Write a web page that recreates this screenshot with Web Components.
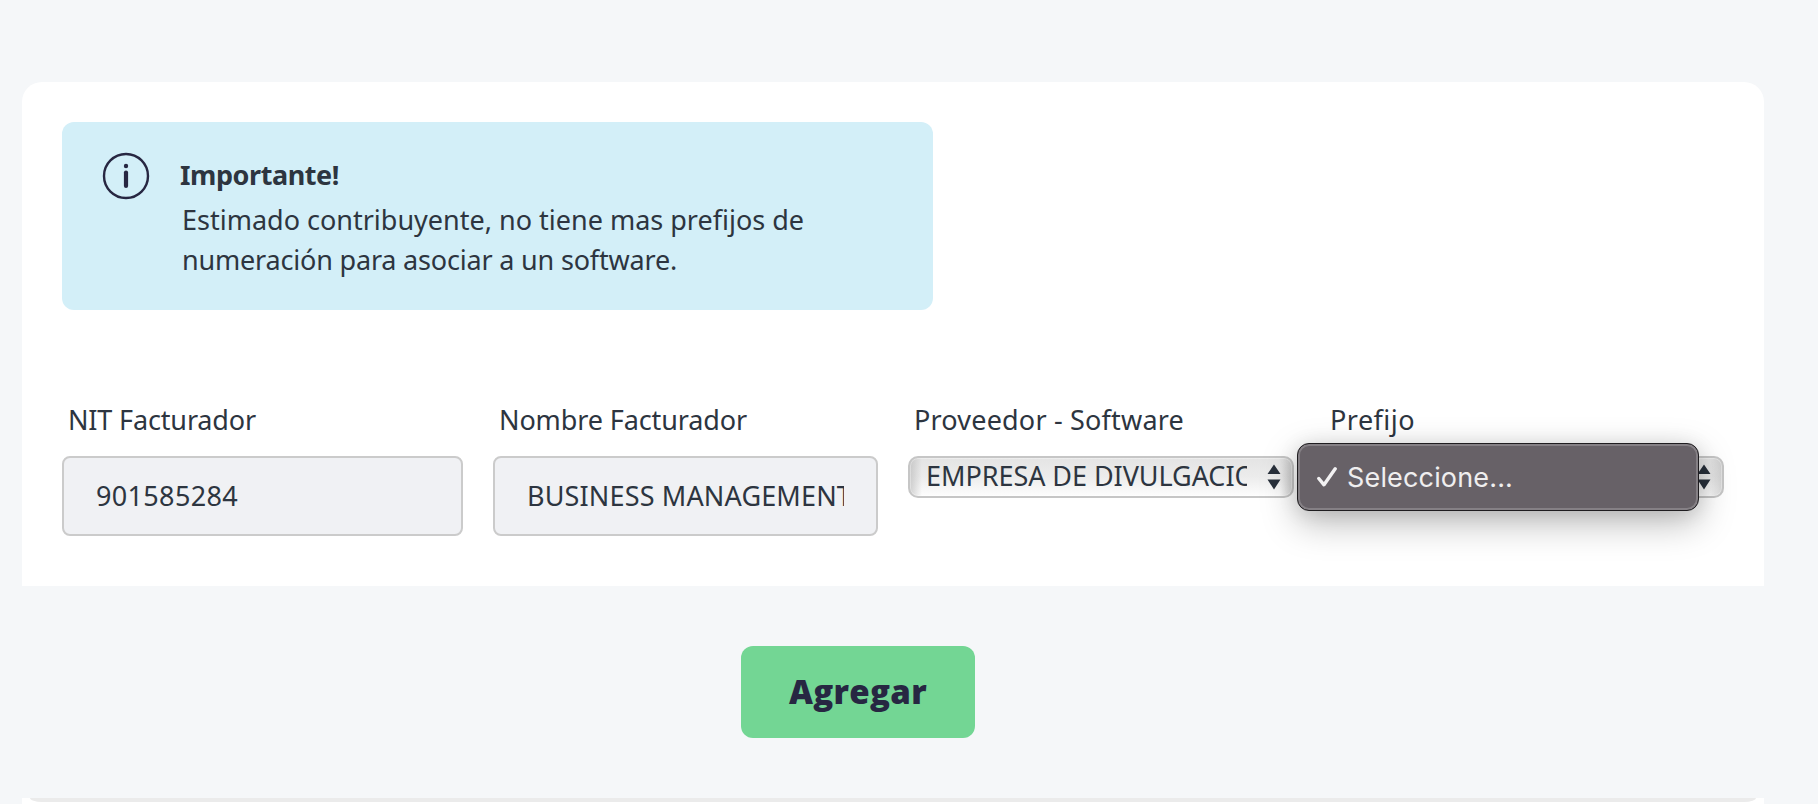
<!DOCTYPE html>
<html lang="es">
<head>
<meta charset="utf-8">
<title>Asociar prefijos</title>
<style>
    html, body {
        margin: 0;
        height: 100%;
        overflow: hidden;
    }
    body {
        background: #f5f7f9;
        color: #2d3540;
        font-family: "Noto Sans", sans-serif;
        font-size: 27px;
    }
</style>
</head>
<body>
<prefix-page></prefix-page>

<script>
(function () {
    function define(name, html, setup) {
        const template = document.createElement("template");
        template.innerHTML = html;
        customElements.define(name, class extends HTMLElement {
            constructor() {
                super();
                this.attachShadow({ mode: "open" }).appendChild(template.content.cloneNode(true));
            }
            connectedCallback() {
                if (setup) setup(this, this.shadowRoot);
            }
        });
    }

    // a single line of text, tracked so that it takes the given width
    define("text-line", `
        <style>
            :host { display: block; white-space: nowrap; }
            span { display: inline-block; }
        </style>
        <span><slot></slot></span>
    `, (host, root) => {
        const span = root.querySelector("span");
        const width = span.getBoundingClientRect().width;
        const target = parseFloat(host.getAttribute("width"));
        span.style.letterSpacing = (target - width) / host.textContent.length + "px";
    });

    define("info-alert", `
        <style>
            :host {
                display: flex;
                box-sizing: border-box;
                width: 871px;
                height: 188px;
                padding: 30px 40px;
                gap: 30px;
                border-radius: 12px;
                background: #d3eff8;
            }
            svg { flex: none; width: 48px; height: 48px; }
            .title {
                padding-top: 3px;
                line-height: 40px;
                font-weight: 700;
                margin-bottom: 5px;
            }
            .text { padding-left: 2px; line-height: 40px; }
        </style>
        <svg viewBox="0 0 48 48" fill="none" stroke="#272742" stroke-linecap="round">
            <circle cx="24" cy="24" r="22" stroke-width="2.4"/>
            <path d="M24 20.500v13.500" stroke-width="4.200"/>
            <circle cx="24" cy="14" r="2.200" fill="#272742" stroke="none"/>
        </svg>
        <div>
            <div class="title"><slot name="title"></slot></div>
            <div class="text"><slot></slot></div>
        </div>
    `);

    define("form-field", `
        <style>
            :host { display: block; position: relative; }
            .label { padding-left: 6px; line-height: 40px; margin-bottom: 16px; }
        </style>
        <div class="label"><slot name="label"></slot></div>
        <slot></slot>
        <slot name="menu"></slot>
    `);

    define("text-box", `
        <style>
            :host {
                display: block;
                box-sizing: border-box;
                height: 80px;
                padding: 0 32px;
                border: 2px solid #cbcbcb;
                border-radius: 8px;
                background: #f0f1f4;
                line-height: 76px;
            }
            div { overflow: hidden; }
        </style>
        <div><slot></slot></div>
    `);

    define("select-box", `
        <style>
            :host {
                display: flex;
                align-items: center;
                box-sizing: border-box;
                height: 42px;
                padding: 0 11px 0 16px;
                border: 2px solid #c6c6c6;
                border-radius: 10px;
                background:
                    linear-gradient(90deg, rgba(175,175,175,.55), rgba(255,255,255,0) 12px, rgba(255,255,255,0) calc(100% - 12px), rgba(175,175,175,.45)),
                    linear-gradient(#e4e4e4, #ececec 50%, #fdfdfd);
                box-shadow: inset 0 0 0 1px rgba(255,255,255,.35);
                line-height: 36px;
            }
            div { flex: 1; min-width: 0; margin-right: 20px; overflow: hidden; height: 38px; }
            svg { flex: none; width: 14px; height: 26px; }
        </style>
        <div><slot></slot></div>
        <svg viewBox="0 0 14 26" fill="#28303b"><path d="M7 .5L13.500 10H.5zM7 25.500L.5 15.500h13z"/></svg>
    `);

    // open native-like menu, laid over its select
    define("option-menu", `
        <style>
            :host {
                position: absolute;
                left: -27px;
                top: 43px;
                z-index: 1;
                display: flex;
                align-items: center;
                box-sizing: border-box;
                width: 402px;
                height: 68px;
                padding-left: 19px;
                gap: 10px;
                border: 1px solid #1f1d20;
                border-radius: 12px;
                background: #676167;
                box-shadow: inset 0 0 0 2px #858085, 0 12px 36px rgba(0,0,0,.27), 0 2px 20px rgba(0,0,0,.1);
                color: #efeeef;
                font-family: Inter, sans-serif;
                font-size: 27px;
            }
            svg { width: 20px; height: 20px; }
        </style>
        <svg viewBox="0 0 20 20" fill="none" stroke="#f2f1f2" stroke-width="3.400" stroke-linecap="round" stroke-linejoin="round">
            <path d="M1.800 11.500L7 17.800 18.200 1.800"/>
        </svg>
        <slot></slot>
    `);

    define("main-button", `
        <style>
            :host { display: block; }
            button {
                display: flex;
                justify-content: center;
                width: 234px;
                height: 92px;
                padding: 0;
                border: 0;
                border-radius: 12px;
                background: #73d694;
                color: #272742;
                font: 800 33px/92px "Open Sans", sans-serif;
            }
        </style>
        <button type="button"><slot></slot></button>
    `);

    define("prefix-page", `
        <style>
            :host {
                display: flex;
                flex-direction: column;
                box-sizing: border-box;
                height: 804px;
                padding: 82px 54px 0 22px;
            }
            .card {
                box-sizing: border-box;
                height: 504px;
                padding: 40px 40px 0;
                border-radius: 20px 20px 0 0;
                background: #fff;
            }
            .fields {
                display: grid;
                grid-template-columns: 401px 385px 386px 400px;
                column-gap: 30px;
                margin-top: 90px;
            }
            .actions { display: flex; padding: 60px 0 60px 719px; }
            .next { height: 6px; background: #fff; }
            .next div { height: 4px; margin: 0 8px; border-radius: 0 0 12px 12px / 0 0 4px 4px; background: #ebebeb; }
        </style>
        <div class="card">
            <info-alert>
                <text-line slot="title" width="159">Importante!</text-line>
                <text-line width="622">Estimado contribuyente, no tiene mas prefijos de</text-line>
                <text-line width="495">numeración para asociar a un software.</text-line>
            </info-alert>
            <div class="fields">
                <form-field>
                    <text-line slot="label" width="188">NIT Facturador</text-line>
                    <text-box><text-line width="142">901585284</text-line></text-box>
                </form-field>
                <form-field>
                    <text-line slot="label" width="248">Nombre Facturador</text-line>
                    <text-box><text-line width="325">BUSINESS MANAGEMENT</text-line></text-box>
                </form-field>
                <form-field>
                    <text-line slot="label" width="270">Proveedor - Software</text-line>
                    <select-box><text-line width="350">EMPRESA DE DIVULGACION</text-line></select-box>
                </form-field>
                <form-field>
                    <text-line slot="label" width="85">Prefijo</text-line>
                    <select-box></select-box>
                    <option-menu slot="menu"><text-line width="166">Seleccione...</text-line></option-menu>
                </form-field>
            </div>
        </div>
        <div class="actions">
            <main-button><text-line width="138">Agregar</text-line></main-button>
        </div>
        <div class="next"><div></div></div>
    `);
})();
</script>
</body>
</html>
